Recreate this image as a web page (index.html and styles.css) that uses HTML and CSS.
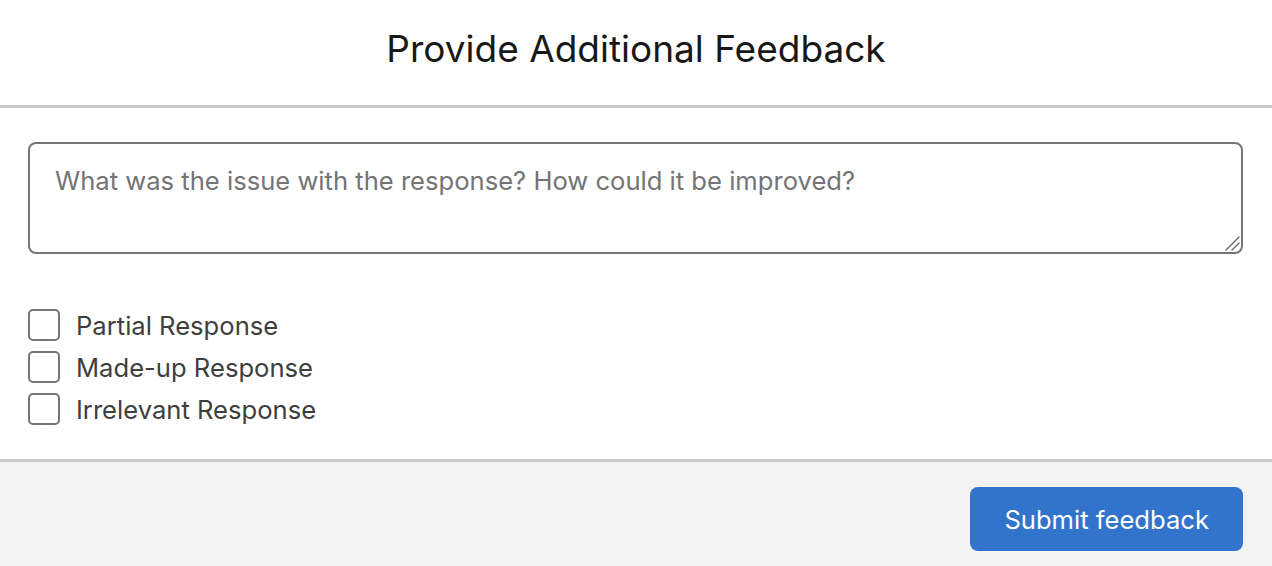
FILE: index.html
```html
<!doctype html>
<html lang="en">
<head>
    <meta charset="utf-8">
    <meta name="viewport" content="width=device-width, initial-scale=1">
    <title>Provide Additional Feedback</title>
    <link rel="stylesheet" href="styles.css">
</head>
<body>

    <div class="modal">
        <header class="modal-header">
            <h1>Provide Additional Feedback</h1>
        </header>

        <div class="modal-body">
            <div class="text-wrap">
                <textarea class="feedback-text" placeholder="What was the issue with the response? How could it be improved?"></textarea>
                <svg class="grip" width="16" height="16" viewBox="0 0 16 16" aria-hidden="true">
                    <line x1="2" y1="15" x2="15" y2="2" />
                    <line x1="8" y1="15" x2="15" y2="8" />
                </svg>
            </div>

            <div class="options">
                <label class="option">
                    <input type="checkbox" class="option-box">
                    <span>Partial Response</span>
                </label>
                <label class="option">
                    <input type="checkbox" class="option-box">
                    <span>Made-up Response</span>
                </label>
                <label class="option">
                    <input type="checkbox" class="option-box">
                    <span>Irrelevant Response</span>
                </label>
            </div>
        </div>

        <footer class="modal-footer">
            <button type="button" class="btn-submit">Submit feedback</button>
        </footer>
    </div>

</body>
</html>
```

FILE: styles.css
```css
body {
    font-family: Inter, "Liberation Sans", Arial, sans-serif;
    margin: 0;
    padding: 0;
    background: #fff;
}

.modal {
    width: 100%;
    height: 566px;
    display: flex;
    flex-direction: column;
}

.modal-header {
    height: 108px;
    box-sizing: border-box;
    padding-bottom: 9px;
    border-bottom: 3px solid #c9c9c9;
    display: flex;
    align-items: center;
    justify-content: center;
}

h1 {
    margin: 0;
    font-size: 37px;
    font-weight: 400;
    color: #181818;
}

.modal-body {
    padding: 34px 29px 34px 28px;
}

.text-wrap {
    position: relative;
}

.feedback-text {
    display: block;
    width: 100%;
    height: 112px;
    box-sizing: border-box;
    padding: 21px 25px;
    border: 2px solid #767676;
    border-radius: 8px;
    font-family: inherit;
    font-size: 25.6px;
    color: #181818;
    resize: none;
}

.feedback-text::placeholder {
    color: #747474;
}

.feedback-text:focus {
    outline: none;
}

.grip {
    position: absolute;
    right: 3px;
    bottom: 3px;
    pointer-events: none;
}

.grip line {
    stroke: #6f6f6f;
    stroke-width: 1.5;
    stroke-linecap: round;
}

.options {
    margin-top: 55px;
    display: flex;
    flex-direction: column;
    gap: 10px;
}

.option {
    display: flex;
    align-items: center;
    gap: 16px;
    font-size: 25.6px;
    color: #3e3e3c;
    cursor: pointer;
}

.option-box {
    appearance: none;
    margin: 0;
    width: 32px;
    height: 32px;
    border: 2px solid #767676;
    border-radius: 5px;
    background: #fff;
    box-sizing: border-box;
}

.modal-footer {
    flex: 1;
    background: #f3f3f3;
    border-top: 3px solid #c9c9c9;
    display: flex;
    justify-content: flex-end;
    align-items: flex-start;
    padding: 25px 29px 0 0;
}

.btn-submit {
    height: 64px;
    padding: 0 34px;
    background-color: #3274cc;
    border: none;
    border-radius: 8px;
    color: #fff;
    font-family: inherit;
    font-size: 25.6px;
    cursor: pointer;
}
```
